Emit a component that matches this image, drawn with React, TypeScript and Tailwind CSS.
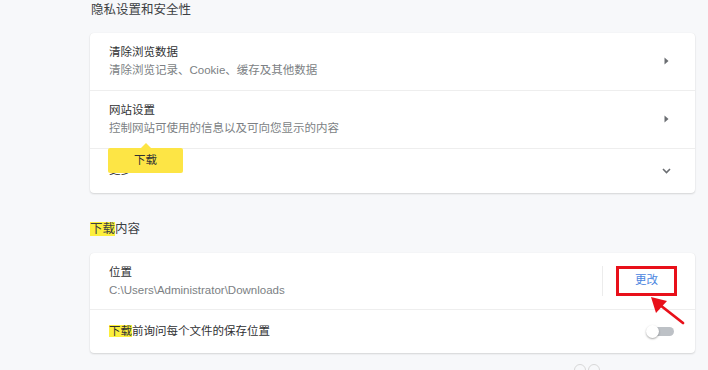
import React from 'react'

const FONT = "font-['Liberation_Sans','Noto_Sans_CJK_SC',sans-serif]"

function ArrowRight() {
    return (
        <svg width="5" height="8" viewBox="0 0 5 8" className="shrink-0">
            <path d="M0.5 0.5 L4.5 4 L0.5 7.5 Z" fill="#6b6e72" />
        </svg>
    )
}

function ChevronDown() {
    return (
        <svg width="9" height="6" viewBox="0 0 9 6" className="shrink-0">
            <path d="M1 1 L4.5 4.5 L8 1" fill="none" stroke="#6b6e72" strokeWidth="1.6" />
        </svg>
    )
}

function LinkRow({ title, sub, last }: { title: string; sub: string; last?: boolean }) {
    return (
        <div className={`flex items-center pl-[19px] pr-[26px] pt-[10px] pb-[11px] ${last ? '' : 'border-b border-[#eeeeee]'}`}>
            <div className="flex-1 flex flex-col">
                <span className="text-[11.5px] leading-[18px] text-[#303133]">{title}</span>
                <span className="text-[11.5px] leading-[18px] text-[#7c7f84]">{sub}</span>
            </div>
            <ArrowRight />
        </div>
    )
}

export default function App() {
    return (
        <main className={`relative h-[370px] overflow-hidden bg-[#f7f8fa] ${FONT}`}>
            <div className="ml-[90px] w-[605px] pt-[2px]">
                {/* Privacy section */}
                <h2 className="pl-[1px] text-[12.5px] leading-[16px] text-[#3c3f43]">隐私设置和安全性</h2>

                <div className="relative mt-[15px] rounded-[4px] bg-white shadow-[0_1px_2px_rgba(0,0,0,0.14),0_0_1px_rgba(0,0,0,0.08)]">
                    <LinkRow title="清除浏览数据" sub="清除浏览记录、Cookie、缓存及其他数据" />
                    <LinkRow title="网站设置" sub="控制网站可使用的信息以及可向您显示的内容" />
                    <div className="flex h-[44px] items-center pl-[19px] pr-[24px]">
                        <span className="flex-1 text-[11.5px] text-[#303133]">更多</span>
                        <ChevronDown />
                    </div>

                    {/* tooltip */}
                    <div className="absolute left-[18px] top-[110px] flex flex-col items-start">
                        <div className="ml-[33px] h-0 w-0 border-x-[5px] border-b-[5px] border-x-transparent border-b-[#fde545]" />
                        <div className="flex h-[25px] w-[75px] items-center justify-center rounded-[2px] bg-[#fde545] text-[11.5px] text-[#303133]">
                            下载
                        </div>
                    </div>
                </div>

                {/* Downloads section */}
                <h2 className="mt-[28px] text-[12.5px] leading-[16px] text-[#3c3f43]">
                    <span className="bg-[#fcef3c]">下载</span>内容
                </h2>

                <div className="relative mt-[16px] rounded-[4px] bg-white shadow-[0_1px_2px_rgba(0,0,0,0.14),0_0_1px_rgba(0,0,0,0.08)]">
                    <div className="flex items-center border-b border-[#eeeeee] pl-[19px] pr-[18px] pt-[10px] pb-[10px]">
                        <div className="flex flex-1 flex-col">
                            <span className="text-[11.5px] leading-[18px] text-[#303133]">位置</span>
                            <span className="text-[11.5px] leading-[18px] text-[#7c7f84]">C:\Users\Administrator\Downloads</span>
                        </div>
                        <div className="h-[30px] w-px bg-[#ececec]" />
                        <button className="ml-[13px] flex h-[30px] w-[61px] items-center justify-center border-[3px] border-[#e8101a] text-[11.5px] text-[#4a84e0]">
                            更改
                        </button>
                    </div>
                    <div className="flex h-[43px] items-center pl-[19px] pr-[21px]">
                        <span className="flex-1 text-[11.5px] text-[#303133]">
                            <span className="bg-[#fcef3c]">下载</span>前询问每个文件的保存位置
                        </span>
                        <div className="relative h-[13px] w-[28px]">
                            <div className="absolute right-0 top-[2px] h-[9px] w-[23px] rounded-full bg-[#bdc1c6]" />
                            <div className="absolute left-0 top-0 h-[13px] w-[13px] rounded-full bg-white shadow-[0_1px_2px_rgba(0,0,0,0.35)]" />
                        </div>
                    </div>

                    {/* red annotation arrow */}
                    <svg width="42" height="40" viewBox="0 0 42 40" className="absolute left-[558px] top-[40px]">
                        <line x1="35" y1="30" x2="12" y2="12" stroke="#e8101a" strokeWidth="2.8" strokeLinecap="round" />
                        <polygon points="3,4 19,8 8,20" fill="#e8101a" />
                    </svg>
                </div>
            </div>

            {/* faint watermark at bottom edge */}
            <div className="absolute left-[574px] top-[364px] flex gap-[2px]">
                <div className="h-[12px] w-[12px] rounded-full border border-[#d8d8d8]" />
                <div className="h-[12px] w-[12px] rounded-full border border-[#d8d8d8]" />
            </div>
        </main>
    )
}
